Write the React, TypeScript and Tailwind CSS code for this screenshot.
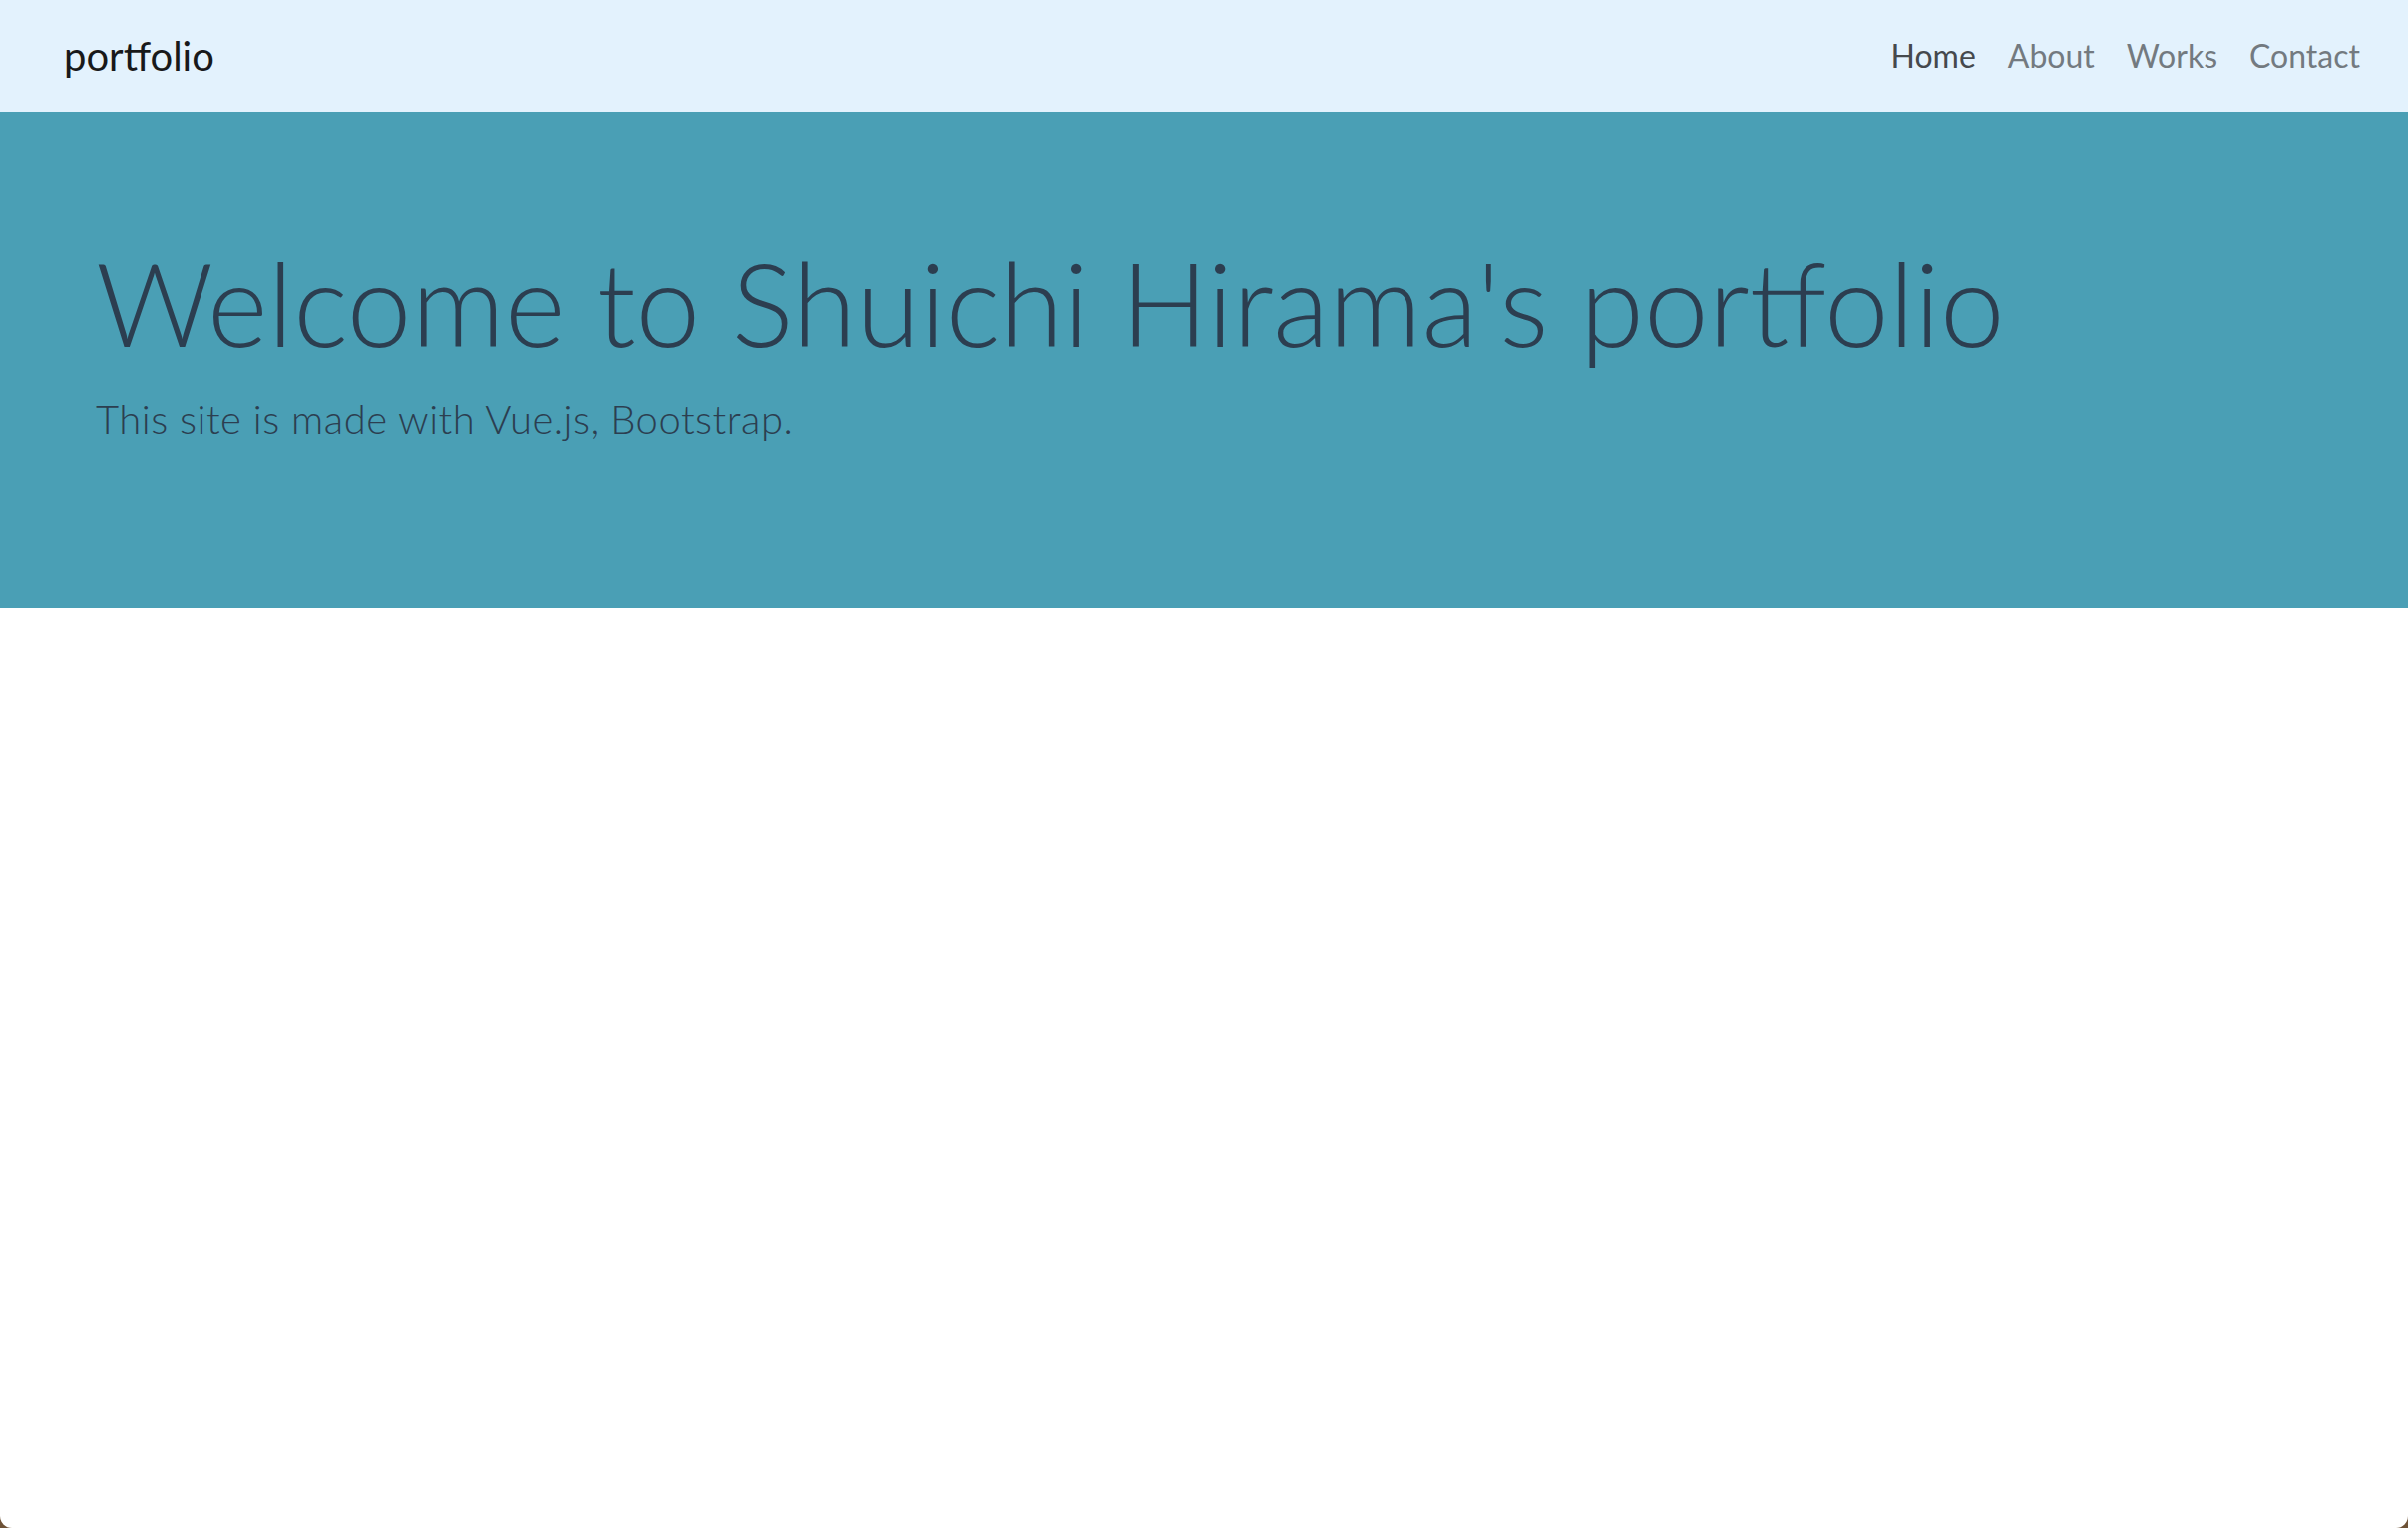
import React from 'react';

const font = { fontFamily: 'Lato, "Noto Sans", sans-serif' };

const links = [
  { label: 'Home', active: true },
  { label: 'About', active: false },
  { label: 'Works', active: false },
  { label: 'Contact', active: false },
];

export default function App() {
  return (
    <div className="h-screen w-full bg-[#6e5236]" style={font}>
      <div className="h-full w-full bg-white rounded-b-[12px] overflow-hidden">
        {/* Navbar */}
        <nav className="h-[112px] bg-[#e3f2fd] flex items-center justify-between pl-[64px] pr-[32px]">
          <a className="text-[40px] leading-none text-[#18191a] font-normal">portfolio</a>
          <ul className="flex items-center">
            {links.map((l) => (
              <li key={l.label}>
                <a
                  className={
                    'block px-[16px] text-[32px] leading-none ' +
                    (l.active ? 'text-[#45494d]' : 'text-[#737a80]')
                  }
                >
                  {l.label}
                </a>
              </li>
            ))}
          </ul>
        </nav>

        {/* Jumbotron */}
        <section className="bg-[#4a9fb5] pt-[128px] pb-[128px] pl-[96px] pr-[64px] text-[#2c3e50]">
          <h1 className="text-[116px] leading-[128px] font-light mb-[22px] whitespace-nowrap">
            Welcome to Shuichi Hirama's portfolio
          </h1>
          <p className="text-[40px] leading-[1.5] font-light tracking-[0.5px] mb-[32px]">
            This site is made with Vue.js, Bootstrap.
          </p>
        </section>
      </div>
    </div>
  );
}
